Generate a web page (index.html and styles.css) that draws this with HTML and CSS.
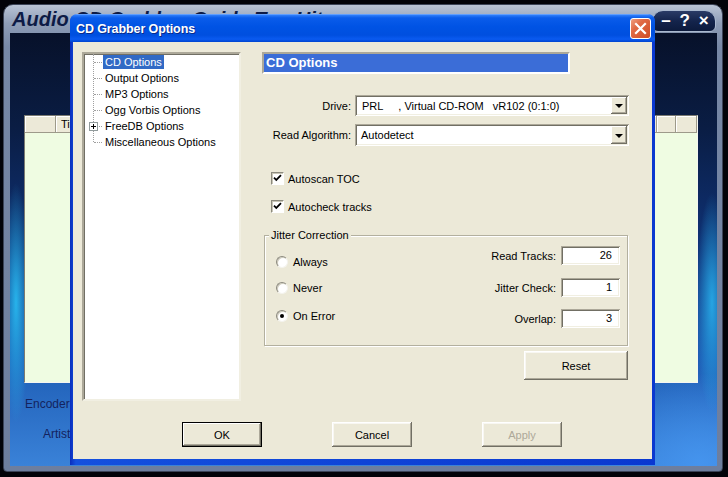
FILE: index.html
```html
<!DOCTYPE html>
<html>
<head>
<meta charset="utf-8">
<link rel="stylesheet" href="styles.css">
</head>
<body>
<div class="bgwin">
  <div class="bg-title">
    <span class="bg-title-text">Audio CD Grabber Guide Top Hits</span>
    <div class="bg-ctrls"><span>–</span><span>?</span><span>×</span></div>
  </div>
  <div class="bg-client">
    <div class="listview">
      <div class="lv-head">
        <div class="lv-col c1"></div>
        <div class="lv-col c2">Title</div>
        <div class="lv-col c3">Artist</div>
        <div class="lv-col c4">Length</div>
        <div class="lv-col c5"></div>
        <div class="lv-col c6"></div>
      </div>
    </div>
    <div class="bg-field enc">Encoder:</div>
    <div class="bg-field art">Artist</div>
  </div>
</div>

<div class="dialog">
  <div class="dlg-title">
    <span class="dlg-title-text">CD Grabber Options</span>
    <div class="dlg-close"><svg width="19" height="19" viewBox="0 0 19 19"><path d="M5 5 L14 14 M14 5 L5 14" stroke="#fff" stroke-width="2.2" stroke-linecap="square" fill="none"/></svg></div>
  </div>
  <div class="dlg-body">
    <div class="dlg-main">
      <div class="tree">
        <ul class="tree-list">
          <li class="ti sel"><span class="tl">CD Options</span></li>
          <li class="ti"><span class="tl">Output Options</span></li>
          <li class="ti"><span class="tl">MP3 Options</span></li>
          <li class="ti"><span class="tl">Ogg Vorbis Options</span></li>
          <li class="ti"><i class="plus"></i><span class="tl">FreeDB Options</span></li>
          <li class="ti"><span class="tl">Miscellaneous Options</span></li>
        </ul>
      </div>
      <div class="panel">
        <div class="ph">CD Options</div>
        <div class="frow r-drive">
          <span class="lbl">Drive:</span>
          <div class="combo"><span class="cv">PRL     , Virtual CD-ROM   vR102 (0:1:0)</span><span class="dd"><i class="tri"></i></span></div>
        </div>
        <div class="frow r-algo">
          <span class="lbl">Read Algorithm:</span>
          <div class="combo tall"><span class="cv">Autodetect</span><span class="dd"><i class="tri"></i></span></div>
        </div>
        <div class="chk c-first"><span class="box"><svg width="9" height="9" viewBox="0 0 9 9"><path d="M1 3.6 L3.3 6 L8 1.2" stroke="#000" stroke-width="1.8" fill="none"/></svg></span><span class="ct">Autoscan TOC</span></div>
        <div class="chk c-second"><span class="box"><svg width="9" height="9" viewBox="0 0 9 9"><path d="M1 3.6 L3.3 6 L8 1.2" stroke="#000" stroke-width="1.8" fill="none"/></svg></span><span class="ct">Autocheck tracks</span></div>
        <div class="group">
          <span class="glabel">Jitter Correction</span>
          <div class="radios">
            <div class="radio rd1"><span class="rc"></span><span class="rt">Always</span></div>
            <div class="radio rd2"><span class="rc"></span><span class="rt">Never</span></div>
            <div class="radio rd3"><span class="rc on"></span><span class="rt">On Error</span></div>
          </div>
          <div class="fields">
            <div class="field f1"><span class="fl">Read Tracks:</span><span class="inp">26</span></div>
            <div class="field f2"><span class="fl">Jitter Check:</span><span class="inp">1</span></div>
            <div class="field f3"><span class="fl">Overlap:</span><span class="inp">3</span></div>
          </div>
        </div>
        <div class="btn reset">Reset</div>
      </div>
    </div>
    <div class="btns">
      <div class="btn def">OK</div>
      <div class="btn">Cancel</div>
      <div class="btn dis">Apply</div>
    </div>
  </div>
</div>
</body>
</html>
```

FILE: styles.css
```css
* { box-sizing: border-box; }
html, body { margin: 0; padding: 0; }
body {
  width: 728px;
  height: 477px;
  overflow: hidden;
  position: relative;
  background: #020309;
  font-family: "Liberation Sans", Arial, sans-serif;
  font-size: 11px;
  color: #000;
}

/* ---------- background application window ---------- */
.bgwin {
  position: absolute;
  left: 3px;
  top: 4px;
  width: 720px;
  height: 468px;
  border: 1px solid #3b4458;
  border-radius: 10px 10px 4px 4px;
  background: linear-gradient(180deg, #b9c4d5 0%, #8e9db7 4%, #7788a6 9%, #6d7e9e 100%);
  padding: 0 5px 5px 6px;
  display: flex;
  flex-direction: column;
}
.bg-title {
  height: 28px;
  display: flex;
  align-items: flex-start;
  flex-shrink: 0;
  overflow: hidden;
}
.bg-title-text {
  margin-top: 3px;
  margin-left: 2px;
  font-size: 20px;
  line-height: 23px;
  font-weight: bold;
  font-style: italic;
  color: #0d1b46;
  white-space: nowrap;
}
.bg-ctrls {
  margin-left: auto;
  margin-right: 1px;
  margin-top: 5px;
  width: 64px;
  height: 22px;
  flex-shrink: 0;
  border: 1px solid #a9b8cf;
  border-radius: 11px 11px 6px 6px;
  background: linear-gradient(180deg, #2a3b66 0%, #14244c 50%, #0c1a3c 100%);
  display: flex;
  justify-content: space-around;
  align-items: center;
  padding: 0 2px 0 4px;
  color: #fff;
  font-weight: bold;
  font-size: 17px;
  line-height: 18px;
}
.bg-client {
  flex: 1;
  background:
    radial-gradient(14px 120px at 6px 270px, rgba(40,185,240,0.95) 0%, rgba(40,185,240,0) 100%),
    radial-gradient(16px 110px at 702px 270px, rgba(40,175,235,0.9) 0%, rgba(40,175,235,0) 100%),
    radial-gradient(110px 90px at 690px 430px, rgba(70,150,240,0.9) 0%, rgba(70,150,240,0) 100%),
    linear-gradient(180deg, #07112a 0%, #0a1d44 22%, #0f3378 50%, #1d5cb4 75%, #3a82d8 100%);
  padding: 82px 0 0 14px;
}
.listview {
  width: 674px;
  height: 268px;
  background: #effce2;
  border: 1px solid;
  border-color: #7b7b72 #f5f5f0 #f5f5f0 #7b7b72;
}
.lv-head { display: flex; height: 17px; }
.lv-col {
  height: 17px;
  background: #ece9d8;
  box-shadow: inset -1px 0 #9d9a8a, inset 0 -1px #9d9a8a, inset 1px 1px #fff;
  padding-left: 5px;
  line-height: 16px;
  font-size: 11px;
  color: #000;
  overflow: hidden;
  white-space: nowrap;
}
.c1 { width: 31px; }
.c2 { width: 300px; }
.c3 { width: 200px; }
.c4 { width: 101px; }
.c5 { width: 19px; }
.c6 { width: 21px; }
.bg-field {
  font-size: 12px;
  line-height: 14px;
  color: #14235e;
}
.enc { margin-top: 14px; padding-left: 1px; }
.art { margin-top: 16px; padding-left: 19px; }

/* ---------- dialog ---------- */
.dialog {
  position: absolute;
  left: 70px;
  top: 14px;
  width: 585px;
  height: 451px;
  border-radius: 8px 8px 0 0;
  background: linear-gradient(90deg, #0a2dbd 0%, #1450de 1%, #0a38d0 100%);
  padding: 0 3px 6px 3px;
  display: flex;
  flex-direction: column;
}
.dlg-title {
  margin: 0 -3px;
  height: 28px;
  flex-shrink: 0;
  border-radius: 7px 7px 0 0;
  background: linear-gradient(180deg, #7fb2ff 0%, #2a7af8 5%, #0a5cea 14%, #0053e4 45%, #004fdf 75%, #0a5af0 90%, #0044cf 100%);
  display: flex;
  align-items: flex-start;
  padding-left: 6px;
}
.dlg-title-text {
  margin-top: 8px;
  color: #fff;
  font-weight: bold;
  font-size: 12.5px;
  line-height: 15px;
  text-shadow: 1px 1px 0 #0a2a8a;
  letter-spacing: -0.1px;
}
.dlg-close {
  margin-left: auto;
  margin-right: 4px;
  margin-top: 4px;
  width: 21px;
  height: 21px;
  border: 1px solid #fff;
  border-radius: 3px;
  background: linear-gradient(135deg, #f0a080 0%, #e06a45 35%, #cf4b24 100%);
  display: flex;
  align-items: center;
  justify-content: center;
}
.dlg-body {
  flex: 1;
  background: #ece9d8;
  padding: 10px 0 0 9px;
}
.dlg-main { display: flex; }

/* tree */
.tree {
  width: 159px;
  height: 349px;
  background: #fff;
  border: 2px solid;
  border-color: #aca899 #f1efe2 #f1efe2 #aca899;
  box-shadow: inset 1px 1px #716f64;
}
.tree-list {
  list-style: none;
  margin: 0;
  padding: 0;
  position: relative;
}
.tree-list::before {
  content: "";
  position: absolute;
  left: 9px;
  top: 0;
  height: 88px;
  border-left: 1px dotted #a0a0a0;
}
.ti {
  position: relative;
  height: 16px;
  padding-left: 19px;
  display: flex;
  align-items: center;
  white-space: nowrap;
}
.ti::before {
  content: "";
  position: absolute;
  left: 10px;
  top: 8px;
  width: 8px;
  border-top: 1px dotted #a0a0a0;
}
.tl {
  padding: 0 2px 0 2px;
  line-height: 14px;
  height: 14px;
}
.sel .tl { background: #316ac5; color: #fff; }
.plus {
  position: absolute;
  left: 5px;
  top: 4px;
  width: 9px;
  height: 9px;
  border: 1px solid #919b9c;
  background: #fff;
  z-index: 1;
}
.plus::before {
  content: "";
  position: absolute;
  left: 1px;
  top: 3px;
  width: 5px;
  height: 1px;
  background: #000;
}
.plus::after {
  content: "";
  position: absolute;
  left: 3px;
  top: 1px;
  width: 1px;
  height: 5px;
  background: #000;
}

/* right panel */
.panel {
  margin-left: 21px;
  width: 367px;
  display: flex;
  flex-direction: column;
}
.ph {
  width: 308px;
  height: 22px;
  background: #3b6dd7;
  border: 2px solid;
  border-color: #aca899 #fff #fff #aca899;
  color: #fff;
  font-weight: bold;
  font-size: 13px;
  line-height: 18px;
  padding-left: 2px;
}
.frow { display: flex; align-items: center; }
.r-drive { margin-top: 21px; height: 21px; }
.r-algo { margin-top: 8px; height: 22px; }
.lbl {
  width: 89px;
  text-align: right;
  white-space: nowrap;
}
.combo {
  margin-left: 4px;
  width: 274px;
  height: 21px;
  background: #fff;
  box-shadow: inset 1px 1px #aca899, inset -1px -1px #fff, inset 2px 2px #716f64, inset -2px -2px #f1efe2;
  position: relative;
  display: flex;
  align-items: center;
  padding-left: 7px;
}
.combo.tall { height: 22px; padding-left: 6px; }
.cv { white-space: pre; }
.dd {
  position: absolute;
  right: 2px;
  top: 2px;
  width: 16px;
  bottom: 2px;
  background: #ece9d8;
  box-shadow: inset -1px -1px #716f64, inset 1px 1px #fff, inset -2px -2px #aca899;
  display: flex;
  align-items: center;
  justify-content: center;
}
.tri {
  width: 0;
  height: 0;
  border-left: 4px solid transparent;
  border-right: 4px solid transparent;
  border-top: 4px solid #000;
  margin-top: 1px;
}
.chk {
  display: flex;
  align-items: center;
  height: 15px;
  margin-left: 9px;
}
.c-first { margin-top: 25px; }
.c-second { margin-top: 13px; }
.box {
  width: 13px;
  height: 13px;
  background: #fff;
  border: 1px solid;
  border-color: #8c8a7e #fff #fff #8c8a7e;
  box-shadow: inset 1px 1px #c9c6b6;
  display: flex;
  align-items: center;
  justify-content: center;
}
.ct { margin-left: 4px; }

.group {
  position: relative;
  margin-top: 21px;
  margin-left: 2px;
  width: 364px;
  height: 111px;
  border: 1px solid #b3b09f;
  box-shadow: inset 1px 1px #fff, 1px 1px #fff;
  display: flex;
}
.glabel {
  position: absolute;
  left: 4px;
  top: -7px;
  padding: 0 2px;
  background: #ece9d8;
  line-height: 13px;
}
.radios {
  padding-left: 11px;
  display: flex;
  flex-direction: column;
}
.radio { display: flex; align-items: center; height: 16px; }
.rd1 { margin-top: 18px; }
.rd2 { margin-top: 10px; }
.rd3 { margin-top: 12px; }
.rc {
  position: relative;
  width: 12px;
  height: 12px;
  border-radius: 50%;
  background: #fff;
  border: 1px solid;
  border-color: #8c8a7e #f4f3ee #f4f3ee #8c8a7e;
  box-shadow: inset 1px 1px #cfccbe;
}
.rc.on::after {
  content: "";
  position: absolute;
  left: 3px;
  top: 3px;
  width: 4px;
  height: 4px;
  border-radius: 50%;
  background: #000;
}
.rt { margin-left: 5px; }
.fields {
  margin-left: auto;
  margin-right: 7px;
  display: flex;
  flex-direction: column;
}
.field {
  display: flex;
  align-items: center;
  justify-content: flex-end;
  height: 19px;
}
.f1 { margin-top: 10px; }
.f2 { margin-top: 13px; }
.f3 { margin-top: 12px; }
.fl { margin-right: 5px; white-space: nowrap; }
.inp {
  width: 59px;
  height: 19px;
  background: #fff;
  box-shadow: inset 1px 1px #aca899, inset -1px -1px #fff, inset 2px 2px #716f64, inset -2px -2px #f1efe2;
  text-align: right;
  padding-right: 8px;
  line-height: 19px;
}

/* buttons */
.btn {
  width: 80px;
  height: 25px;
  background: #ece9d8;
  box-shadow: inset -1px -1px #716f64, inset 1px 1px #fff, inset -2px -2px #aca899, inset 2px 2px #f8f7f2;
  display: flex;
  align-items: center;
  justify-content: center;
}
.reset {
  margin-top: 5px;
  margin-left: 262px;
  width: 104px;
  height: 29px;
}
.btns {
  display: flex;
  gap: 70px;
  margin-top: 21px;
  padding-left: 100px;
}
.btn.def {
  border: 1px solid #000;
  box-shadow: inset -1px -1px #716f64, inset 1px 1px #fff, inset -2px -2px #aca899;
}
.btn.dis { color: #aca899; }
```
